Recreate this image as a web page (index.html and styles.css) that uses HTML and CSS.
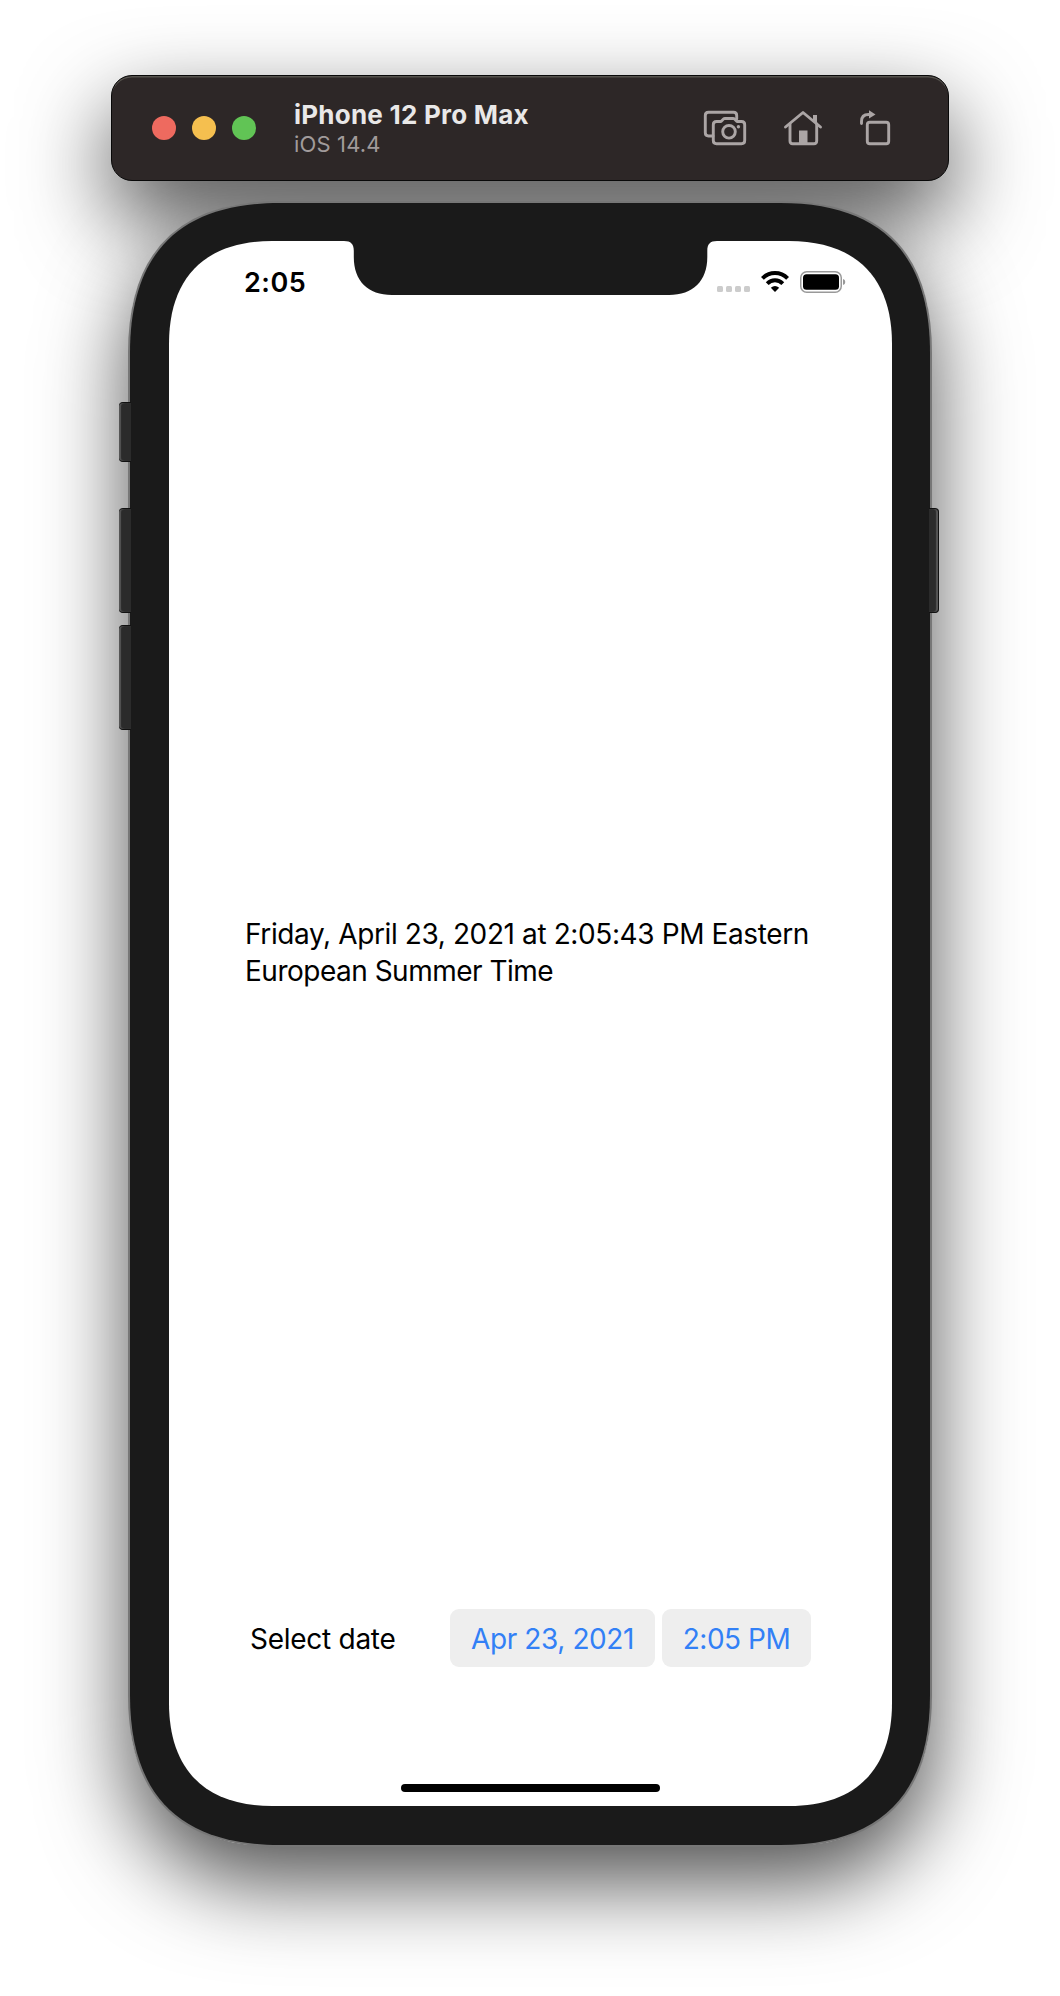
FILE: index.html
```html
<!DOCTYPE html>
<html lang="en">
<head>
<meta charset="utf-8">
<title>iPhone 12 Pro Max</title>
<link rel="stylesheet" href="styles.css">
</head>
<body>
<main class="simulator">
  <header class="toolbar">
    <div class="lights">
      <span class="light close"></span>
      <span class="light minimize"></span>
      <span class="light zoom"></span>
    </div>
    <div class="titles">
      <h1 class="device-name">iPhone 12 Pro Max</h1>
      <p class="device-os">iOS 14.4</p>
    </div>
    <div class="actions">
      <svg class="action" width="42" height="36" viewBox="0 0 42 36">
        <path d="M9 26H4.500Q1.300 26 1.300 22.800V5.500Q1.300 2.300 4.500 2.300H29.500Q32.700 2.300 32.700 5.500V9"/>
        <path d="M12.500 11.500H17L19.500 9Q20 8.500 21 8.500H29Q30 8.500 30.500 9L33 11.500H37.500Q40.700 11.500 40.700 14.700V30.500Q40.700 33.700 37.500 33.700H12.500Q9.300 33.700 9.300 30.500V14.700Q9.300 11.500 12.500 11.500Z"/>
        <circle cx="25" cy="21.800" r="6.300"/>
        <circle class="solid" cx="34.400" cy="16.800" r="1.700"/>
      </svg>
      <svg class="action" width="38" height="36" viewBox="0 0 38 36">
        <path d="M1.500 17L19 2.500L36.500 17"/>
        <path d="M6 14V31Q6 33.700 8.700 33.700H30Q32.700 33.700 32.700 31V14"/>
        <path class="solid" d="M29 5H33V15L29 11.500ZM15 20.500H23.500V34H15Z"/>
      </svg>
      <svg class="action" width="32" height="36" viewBox="0 0 32 36">
        <path d="M1.500 13.500V11.500Q1.500 4.500 8.500 4.500H10"/>
        <path class="solid" d="M9 .3L15.500 4.500L9 8.500Z"/>
        <rect x="7.300" y="12.300" width="21.400" height="21.400" rx="2.500"/>
      </svg>
    </div>
  </header>

  <section class="phone">
    <span class="key mute"></span>
    <span class="key volume-up"></span>
    <span class="key volume-down"></span>
    <span class="key power"></span>
    <svg class="shell" width="804" height="1646" viewBox="-2 -2 804 1646">
      <path class="body" d="M0 150c0-100.200 49.800-150 150-150h500c100.200 0 150 49.800 150 150v1342c0 100.200-49.800 150-150 150h-500c-100.200 0-150-49.800-150-150z"/>
      <path class="glass" d="M39 141c0-66.700 36.300-103 103-103h517c66.700 0 103 36.300 103 103v1359c0 66.700-36.300 103-103 103h-517c-66.700 0-103-36.300-103-103z"/>
      <path class="notch" d="M212 37.500V38H214C221 38 223.800 41 223.800 48V54C223.800 78 238 92 262 92H539C563 92 577.300 78 577.300 54V48C577.300 41 580 38 587 38H589V37.500Z"/>
    </svg>

    <div class="screen">
      <div class="status">
        <span class="clock">2:05</span>
        <div class="indicators">
          <svg width="34" height="6" viewBox="0 0 34 6" class="signal">
            <rect width="6" height="6" rx="1.500"/><rect x="9" width="6" height="6" rx="1.500"/><rect x="18" width="6" height="6" rx="1.500"/><rect x="27" width="6" height="6" rx="1.500"/>
          </svg>
          <svg width="28" height="22" viewBox="0 0 28 22" class="wifi">
            <path d="M1.400 7.400C8.300 .3 19.700 .3 26.600 7.400M6.200 12.600C10.600 8.200 17.400 8.200 21.800 12.600"/>
            <path class="dot" d="M14 21L9.800 16.800Q14 13.400 18.200 16.800Z"/>
          </svg>
          <svg width="46" height="22" viewBox="0 0 46 22" class="battery">
            <rect class="case" x=".75" y=".75" width="40.500" height="20.500" rx="6"/>
            <rect x="3" y="3.300" width="36" height="15.400" rx="3.500"/>
            <path class="cap" d="M43 8Q45.300 8.700 45.300 11T43 14Z"/>
          </svg>
        </div>
      </div>
      <p class="message"><span class="first-line">Friday, April 23, 2021 at 2:05:43 PM Eastern</span> <br>European Summer Time</p>
      <div class="picker">
        <span class="label">Select date</span>
        <div class="chips">
          <span class="chip date">Apr 23, 2021</span>
          <span class="chip time">2:05 PM</span>
        </div>
      </div>
      <div class="home-bar"></div>
    </div>
  </section>
</main>
</body>
</html>
```
FILE: styles.css
```css
* { box-sizing: border-box; }

body {
  margin: 0;
  background: #fff;
  font-family: Inter, "Liberation Sans", sans-serif;
}

h1, p { margin: 0; }

.simulator {
  display: flex;
  flex-direction: column;
  align-items: center;
  gap: 22px;
  height: 1996px;
  padding-top: 75px;
  overflow: hidden;
  isolation: isolate;
}

.toolbar {
  display: flex;
  align-items: center;
  width: 838px;
  height: 106px;
  padding: 0 56px 0 40px;
  border: 1px solid #080808;
  border-radius: 21px;
  background: #2d2727;
  box-shadow: inset 0 2px 0 -0.5px #55524d, 0 36px 88px rgba(0, 0, 0, .7);
}

.lights { display: flex; gap: 16px; }
.light { width: 24px; height: 24px; border-radius: 50%; }
.close { background: #ee6a5f; }
.minimize { background: #f5bf4f; }
.zoom { background: #61c455; }

.titles { margin: 2px 0 0 38px; white-space: nowrap; }
.device-name { color: #e9e8e8; font-size: 26px; font-weight: 700; line-height: 30px; letter-spacing: .23px; }
.device-os { color: #a19b9b; font-size: 22px; line-height: 29px; letter-spacing: .15px; }

.actions { display: flex; gap: 38px; margin-left: auto; }
.action { fill: none; stroke: #aba5a5; stroke-width: 2.900; stroke-linecap: round; stroke-linejoin: round; overflow: visible; }
.action .solid { fill: #aba5a5; stroke: none; }

.phone {
  position: relative;
  flex: none;
  width: 800px;
  height: 1642px;
  padding: 38px 38px 39px 39px;
}
.phone::before {
  content: "";
  position: absolute;
  inset: 0;
  z-index: -1;
  border-radius: 128px;
  box-shadow: 0 36px 88px rgba(0, 0, 0, .7);
}

.shell { position: absolute; left: -2px; top: -2px; }
.body { fill: #1a1a1a; stroke: #777; stroke-width: 4; paint-order: stroke; }
.glass { fill: #fff; }
.notch { fill: #1a1a1a; }

.key {
  position: absolute;
  left: -11px;
  z-index: 1;
  width: 12px;
  background: #2b2b2b;
  border: solid #111;
  border-width: 1px 0;
  border-radius: 4px 0 0 4px;
  box-shadow: inset 2px 0 1px #555;
}
.mute { top: 199px; height: 60px; }
.volume-up { top: 305px; height: 105px; }
.volume-down { top: 422px; height: 105px; }
.power {
  left: 799px;
  top: 305px;
  width: 10px;
  height: 105px;
  border-right-width: 1px;
  border-radius: 0 4px 4px 0;
  box-shadow: inset -2px 0 1px #555;
}

.screen {
  position: relative;
  display: flex;
  flex-direction: column;
  height: 1565px;
  color: #000;
  white-space: nowrap;
}

.status {
  display: flex;
  justify-content: space-between;
  align-items: center;
  height: 82px;
  padding: 0 46px 0 75px;
}
.clock { font-size: 27px; font-weight: 600; letter-spacing: .5px; }
.indicators { display: flex; align-items: center; gap: 11px; margin-top: -1px; }
.signal { fill: #ccc; margin-top: 15px; margin-right: -1px; }
.wifi { fill: none; stroke: #000; stroke-width: 4; }
.wifi .dot { fill: #000; stroke: none; }
.battery .case { fill: none; stroke: #999; stroke-width: 1.500; }
.battery .cap { fill: #999; }

.message { margin: 593px 0 0 76px; font-size: 28px; line-height: 37px; letter-spacing: -.5px; }
.first-line { letter-spacing: -.39px; }

.picker {
  display: flex;
  align-items: center;
  justify-content: space-between;
  margin-top: 619px;
  padding: 0 81px;
  font-size: 28px;
  letter-spacing: -.5px;
}
.label { padding-top: 2px; letter-spacing: -.27px; }
.chips { display: flex; gap: 7px; }
.chip {
  display: flex;
  align-items: center;
  justify-content: center;
  width: 205px;
  height: 58px;
  padding-top: 1px;
  border-radius: 9px;
  background: #eee;
  color: #3280f6;
}
.date { letter-spacing: -.4px; }
.time { width: 149px; }

.home-bar {
  align-self: center;
  width: 259px;
  height: 8px;
  margin: auto 0 14px;
  border-radius: 4px;
  background: #000;
}
```
